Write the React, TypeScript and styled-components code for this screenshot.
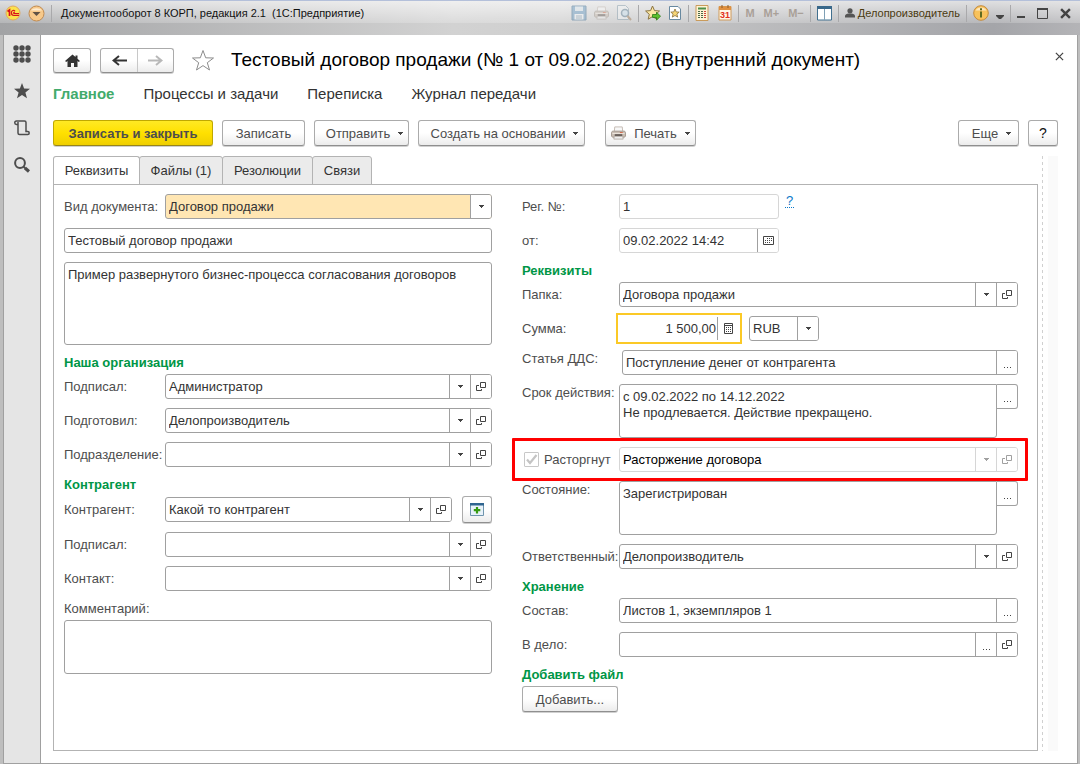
import React from 'react';
import styled, { createGlobalStyle, css } from 'styled-components';

const GlobalStyle = createGlobalStyle`
  *, *::before, *::after { box-sizing: border-box; }
  body {
    margin: 0;
    font-family: "Liberation Sans", Arial, sans-serif;
    font-size: 13px;
    line-height: 17px;
    color: #333;
    background: #bebebe;
  }
  button, input, textarea, select { font: inherit; color: inherit; margin: 0; }
  svg { display: block; flex: none; }
`;

/* ---------- window frame ---------- */

const Window = styled.div`
  display: flex;
  flex-direction: column;
  min-height: 100vh;
`;

const TitleBar = styled.header`
  height: 35px;
  border-top: 1px solid #b4c0da;
  background: linear-gradient(90deg, #a2a3a5 0%, #d2d2d2 42%, #cfcfcf 52%, #a4a5a9 92%, #b4b4b7 100%);
`;

const TitleStrip = styled.div`
  display: flex;
  align-items: center;
  height: 22px;
  padding: 2px 9px 0 5px;
  font-size: 11px;
  line-height: 16px;
  color: #111;
  background: linear-gradient(180deg, rgba(255, 255, 255, 0.65), rgba(255, 255, 255, 0.2));
`;

const WindowTitle = styled.div`
  flex: 1;
  white-space: pre;
`;

const Separator = styled.span`
  width: 1px;
  height: 17px;
  margin: 0 6px;
  background: #a9a9ab;
`;

const Tool = styled.button<{ $faded?: boolean }>`
  display: flex;
  align-items: center;
  justify-content: center;
  height: 18px;
  padding: 0;
  border: 0;
  background: none;
  opacity: ${(p) => (p.$faded ? 0.5 : 1)};
`;

const ToolGroup = styled.div<{ $gap: number }>`
  display: flex;
  align-items: center;
  gap: ${(p) => p.$gap}px;
`;

const MemoryKey = styled(Tool)`
  font-weight: bold;
  color: #a9a098;
`;

const UserButton = styled(Tool)`
  gap: 3px;
  color: #4a3a10;
`;

const Body = styled.div`
  flex: 1;
  display: flex;
  margin: 0 2px 0 3px;
  border: solid #a0a0a0;
  border-width: 0 1px 1px;
  background: #fff;
`;

const SideBar = styled.nav`
  display: flex;
  flex-direction: column;
  align-items: center;
  width: 37px;
  gap: 15px;
  padding-top: 8px;
  background: #e5e5e5;
  border-right: 1px solid #a0a0a0;
`;

const SideButton = styled.button`
  display: flex;
  align-items: center;
  justify-content: center;
  width: 22px;
  height: 22px;
  padding: 0;
  border: 0;
  background: none;
`;

/* ---------- page header ---------- */

const Page = styled.main`
  flex: 1;
  min-width: 0;
  display: flex;
  flex-direction: column;
  padding: 12px 19px 12px 12px;
`;

const PageHeader = styled.div`
  display: flex;
  align-items: center;
  height: 26px;
`;

const buttonFace = css`
  border: 1px solid #ababab;
  border-bottom-color: #8f8f8f;
  border-radius: 3px;
  background: linear-gradient(180deg, #fff 50%, #ececec);
  box-shadow: 0 1px 0 #d0d0d0;
`;

const NavGroup = styled.div`
  ${buttonFace}
  display: flex;
  height: 25px;
  margin-right: 9px;
`;

const NavButton = styled.button`
  display: flex;
  align-items: center;
  justify-content: center;
  width: 36px;
  padding: 0;
  border: 0;
  background: none;
  & + & { border-left: 1px solid #c8c8c8; }
`;

const StarButton = styled.button`
  display: flex;
  margin: 0 16px 0 8px;
  padding: 0;
  border: 0;
  background: none;
`;

const PageTitle = styled.h1`
  flex: 1;
  margin: 0;
  font-size: 19px;
  line-height: 26px;
  font-weight: normal;
  color: #000;
`;

const CloseButton = styled.button`
  align-self: flex-start;
  display: flex;
  padding: 5px 0 0;
  margin-right: -6px;
  border: 0;
  background: none;
`;

const Sections = styled.nav`
  display: flex;
  gap: 29px;
  margin-top: 11px;
  font-size: 15px;
  line-height: 20px;
`;

const SectionLink = styled.a<{ $current?: boolean }>`
  text-decoration: none;
  color: ${(p) => (p.$current ? '#42ab6c' : '#333')};
  font-weight: ${(p) => (p.$current ? 'bold' : 'normal')};
`;

/* ---------- command bar ---------- */

const Commands = styled.div`
  display: flex;
  gap: 9px;
  margin-top: 16px;
`;

const Spacer = styled.div`
  flex: 1;
`;

const Command = styled.button<{ $primary?: boolean; $menu?: boolean; $width: number; $apart?: boolean }>`
  ${buttonFace}
  display: flex;
  align-items: center;
  justify-content: center;
  gap: 8px;
  width: ${(p) => p.$width}px;
  height: 26px;
  padding: 0 0 0 ${(p) => (p.$menu ? 6 : 0)}px;
  margin-left: ${(p) => (p.$apart ? 11 : 0)}px;
  white-space: nowrap;
  color: #4d4d4d;
  ${(p) =>
    p.$primary &&
    css`
      font-weight: bold;
      border-color: #c0a800;
      border-bottom-color: #97851a;
      background: linear-gradient(180deg, #ffe924, #ffe000 50%, #efcf00);
    `}
`;

const HelpCommand = styled(Command)`
  font-size: 14px;
  color: #111;
`;

/* ---------- tabs ---------- */

const Content = styled.div`
  flex: 1;
  display: flex;
  margin-top: 10px;
`;

const TabArea = styled.div`
  flex: 1;
  min-width: 0;
  display: flex;
  flex-direction: column;
`;

const Tabs = styled.div`
  display: flex;
`;

const Tab = styled.button<{ $active?: boolean; $width: number }>`
  width: ${(p) => p.$width}px;
  height: 29px;
  margin: 0 -1px -1px 0;
  padding: 0;
  border: 1px solid #b3b3b3;
  border-bottom-color: ${(p) => (p.$active ? '#fff' : '#b3b3b3')};
  border-radius: 3px 3px 0 0;
  background: ${(p) => (p.$active ? '#fff' : '#ebebeb')};
`;

const Panel = styled.form`
  flex: 1;
  display: grid;
  grid-template-columns: minmax(0, 428fr) minmax(0, 496fr);
  align-items: start;
  gap: 30px;
  padding: 9px 19px 10px 10px;
  border: 1px solid #b3b3b3;
`;

const SplitLine = styled.div`
  width: 1px;
  margin: 0 5px 0 4px;
  background: repeating-linear-gradient(180deg, #d0d0d0 0 3px, transparent 3px 6px);
`;

const ScrollTrack = styled.div`
  width: 10px;
  background: #fafafa;
`;

/* ---------- form ---------- */

const Column = styled.div`
  display: flex;
  flex-direction: column;
  gap: 9px;
`;

const Group = styled.section`
  display: flex;
  flex-direction: column;
  align-items: stretch;
  gap: 9px;
`;

const GroupTitle = styled.h2`
  margin: 0 0 -6px;
  font-size: 13px;
  line-height: 17px;
  color: #009646;
`;

const BlockLabel = styled.label`
  margin-bottom: -6px;
  color: #4d4d4d;
`;

const Row = styled.div<{ $top?: boolean; $right?: boolean }>`
  position: relative;
  display: grid;
  grid-template-columns: ${(p) => (p.$right ? 97 : 101)}px minmax(0, 1fr);
  align-items: ${(p) => (p.$top ? 'start' : 'center')};
`;

const Label = styled.label`
  white-space: nowrap;
  color: #4d4d4d;
`;

const Line = styled.div<{ $indent?: boolean }>`
  display: flex;
  align-items: center;
  gap: 10px;
  padding-left: ${(p) => (p.$indent ? 3 : 0)}px;
`;

const Box = styled.div<{ $width?: number; $light?: boolean; $focus?: boolean; $fill?: string }>`
  display: flex;
  flex: ${(p) => (p.$width ? 'none' : '1')};
  width: ${(p) => (p.$width ? p.$width + 'px' : 'auto')};
  min-width: 0;
  height: 25px;
  overflow: hidden;
  border: 1px solid ${(p) => (p.$light ? '#d6d6d6' : '#a0a0a0')};
  border-radius: 3px;
  background: #fff;
  ${(p) => p.$fill && `background: ${p.$fill};`}
  ${(p) =>
    p.$focus &&
    css`
      border-color: transparent;
      border-radius: 0;
      outline: 2px solid #fbc926;
      outline-offset: 1px;
    `}
`;

const Input = styled.input<{ $right?: boolean; $dark?: boolean }>`
  flex: 1;
  min-width: 0;
  width: 100%;
  height: 23px;
  padding: 0 3px;
  padding-right: ${(p) => (p.$right ? 1 : 3)}px;
  border: 0;
  outline: 0;
  background: none;
  text-align: ${(p) => (p.$right ? 'right' : 'left')};
  ${(p) => p.$dark && 'color: #000;'}
`;

const BoxButton = styled.button<{ $light?: boolean }>`
  display: flex;
  align-items: center;
  justify-content: center;
  width: 21px;
  height: 23px;
  flex: none;
  padding: 0;
  border: 0;
  border-left: 1px solid ${(p) => (p.$light ? '#d6d6d6' : '#a0a0a0')};
  background: #fff;
`;

const TextArea = styled.textarea<{ $height: number; $joined?: boolean }>`
  display: block;
  flex: 1 1 auto;
  width: 100%;
  min-width: 0;
  height: ${(p) => p.$height}px;
  padding: 4px 3px;
  line-height: 16px;
  border: 1px solid #a0a0a0;
  border-radius: ${(p) => (p.$joined ? '3px 0 3px 3px' : '3px')};
  outline: 0;
  resize: none;
  overflow: hidden;
`;

const SideEllipsis = styled.button`
  display: flex;
  align-items: center;
  justify-content: center;
  flex: none;
  width: 21px;
  height: 25px;
  padding: 0;
  border: 1px solid #a0a0a0;
  border-left: 0;
  border-radius: 0 3px 3px 0;
  background: #fff;
`;

const AreaLine = styled.div`
  display: flex;
  align-items: flex-start;
`;

const HintLink = styled.a`
  align-self: flex-start;
  padding: 0 1px;
  font-size: 13px;
  line-height: 13px;
  color: #0a78c8;
  text-decoration: none;
  border-bottom: 1px dotted #0a78c8;
`;

const HintLine = styled(Line)`
  gap: 6px;
`;

const HighlightedRow = styled(Row)`
  &::after {
    content: '';
    position: absolute;
    inset: -9px -10px;
    border: 3px solid #f00;
    border-radius: 1px;
    pointer-events: none;
  }
`;

const CheckLabel = styled.label`
  display: flex;
  align-items: center;
  gap: 5px;
  padding-left: 2px;
  color: #4d4d4d;
`;

const Check = styled.input`
  appearance: none;
  width: 15px;
  height: 15px;
  margin: 0;
  border: 1px solid #c8c8c8;
  border-radius: 1px;
  background: #fff;
`;

const CheckHolder = styled.span`
  position: relative;
  display: flex;
  & svg { position: absolute; inset: 0; pointer-events: none; }
`;

const AddButton = styled.button`
  ${buttonFace}
  display: flex;
  align-items: center;
  justify-content: center;
  width: 30px;
  height: 27px;
  padding: 0;
`;

/* ---------- icons ---------- */

const Caret = ({ color = '#444' }: { color?: string }) => (
  <svg width="5" height="3" viewBox="0 0 5 3" shapeRendering="crispEdges">
    <path d="M0 0h5v1H4v1H3v1H2V2H1V1H0z" fill={color} />
  </svg>
);

const OpenIcon = ({ color = '#444' }: { color?: string }) => (
  <svg width="10" height="10" viewBox="0 0 10 10" fill="none" stroke={color}>
    <path d="M4.500 0.500h5v5h-5z" />
    <path d="M3 3.500H0.500V8.500H5.500V7" />
  </svg>
);

const Dots = () => (
  <svg width="9" height="12" viewBox="0 0 9 12" fill="#444">
    <path d="M1 10h1v1H1zM4 10h1v1H4zM7 10h1v1H7z" />
  </svg>
);

const CalendarIcon = () => (
  <svg width="11" height="9" viewBox="0 0 11 9" fill="none" stroke="#444">
    <path d="M.5.5h10v8H.5z" />
    <path d="M4 2.500h1M6 2.500h1M8 2.500h1M2 4.500h1M4 4.500h1M6 4.500h1M8 4.500h1M2 6.500h1M4 6.500h1M6 6.500h1" />
  </svg>
);

const CalculatorIcon = () => (
  <svg width="9" height="11" viewBox="0 0 9 11" fill="none" stroke="#444">
    <path d="M.5.5h8v10h-8zM.5 2.500h8" />
    <path d="M2 4.500h1M4 4.500h1M6 4.500h1M2 6.500h1M4 6.500h1M6 6.500h1M2 8.500h1M4 8.500h1M6 8.500h1" />
  </svg>
);

const Logo = () => (
  <svg width="16" height="16" viewBox="0 0 16 16">
    <circle cx="8" cy="8" r="7" fill="#fbe34c" stroke="#e0a860" />
    <path d="M2.500 6.500 4.500 5v6" fill="none" stroke="#d8141c" strokeWidth="1.700" />
    <path d="M10 6.300C9 4.700 6.400 5.200 6.400 7.800c0 2 1.300 2.700 2.600 2.700H14M9.800 7.500c-1.400-.4-1.600 1.200-.4 1.200H14" fill="none" stroke="#d8141c" strokeWidth="1.200" />
  </svg>
);

const MenuCircle = () => (
  <svg width="17" height="17" viewBox="0 0 17 17">
    <circle cx="8.500" cy="8.500" r="7.500" fill="#f7c98a" stroke="#c08b52" />
    <path d="M3 5.500a6.500 5 0 0 1 11 0z" fill="#fdebd0" />
    <path d="M4.500 7h8l-4 4z" fill="#5f5245" />
  </svg>
);

const Floppy = () => (
  <svg width="16" height="16" viewBox="0 0 16 16">
    <path d="M1 1h14v14H1z" fill="#6f9fc4" stroke="#4b7798" />
    <path d="M4 1.500h8V6H4z" fill="#dfe9f0" />
    <path d="M3.500 9h9v5.500h-9z" fill="#f4f7f9" />
    <path d="M5 11h6M5 13h6" stroke="#7c9bb0" />
  </svg>
);

const Printer = () => (
  <svg width="15" height="14" viewBox="0 0 16 14">
    <path d="M4 .5h8l.5 5h-9z" fill="#f8f8f8" stroke="#c3bab2" />
    <path d="M1.500 5h13l1 1.500v4l-1.500 1H2l-1.500-1v-4z" fill="#c9bdb2" stroke="#a2978e" />
    <path d="M1.500 7.500h13" stroke="#eee6de" />
    <path d="M4 8.500h8v1.500H4z" fill="#3b3430" />
    <path d="M9.500 6.500h3" stroke="#d66a4a" />
    <path d="M3.500 10.500h9l.5 3h-10z" fill="#efefef" stroke="#b5aea6" />
  </svg>
);

const Preview = () => (
  <svg width="16" height="16" viewBox="0 0 16 16">
    <path d="M1.500.5h8l3 3v11h-11z" fill="#f2f4f5" stroke="#8aa0ae" />
    <circle cx="9" cy="8" r="3.500" fill="#cfe3f0" stroke="#68869a" strokeWidth="1.500" />
    <path d="m11.500 11 3.500 4" stroke="#a3805c" strokeWidth="2" />
  </svg>
);

const StarArrow = () => (
  <svg width="16" height="16" viewBox="0 0 16 16">
    <path d="m7.500 1 2 4.600 5 .4-3.800 3.300 1.200 4.900-4.400-2.600-4.300 2.600 1.100-4.900L.6 6l5-.4z" fill="#fbe7a4" stroke="#8b7440" />
    <path d="M7.500 9.500h4V7.200l4 4-4 4v-2.700h-4z" fill="#5cc02c" stroke="#2c7c17" strokeWidth=".8" />
  </svg>
);

const DocStar = () => (
  <svg width="14" height="16" viewBox="0 0 14 16">
    <path d="M1.500 1.500h8.500l2.500 2.500v10.500h-11z" fill="#fff" stroke="#6889a0" />
    <path d="m7 4 1.200 2.900 3 .2-2.300 2 .8 3L7 10.500l-2.700 1.600.8-3-2.300-2 3-.2z" fill="#f7d675" stroke="#8a6f3a" strokeWidth=".8" />
  </svg>
);

const CalcColor = () => (
  <svg width="14" height="16" viewBox="0 0 14 16">
    <path d="M1 .5h12v15H1z" fill="#fff3d4" stroke="#c99b5c" />
    <path d="M3 2.500h8v2H3z" fill="#4c8f4a" />
    <path d="M3 6.500h2M6 6.500h2M3 8.500h2M6 8.500h2M3 10.500h2M6 10.500h2M3 12.500h2M6 12.500h2" stroke="#4a6a48" />
    <path d="M9 6.500h2M9 8.500h2M9 10.500h2M9 12.500h2" stroke="#d0453a" />
  </svg>
);

const DateColor = () => (
  <svg width="14" height="16" viewBox="0 0 14 16">
    <path d="M1 1.500h12v13.500H1z" fill="#fff8ea" stroke="#cf9a5a" />
    <path d="M1 1.500h12v3.500H1z" fill="#e0903f" />
    <path d="M4 0v3M10 0v3" stroke="#8b5a2a" />
    <text x="7" y="13" fontSize="9" fontWeight="bold" textAnchor="middle" fill="#e2321c">31</text>
  </svg>
);

const PanelsIcon = () => (
  <svg width="15" height="15" viewBox="0 0 15 15">
    <path d="M.5.5h14v13.500H.5z" fill="#fff" stroke="#41708f" />
    <path d="M0 0h15v3H0z" fill="#39688a" />
    <path d="M7.500 3v11" stroke="#7fa0b5" />
  </svg>
);

const Person = () => (
  <svg width="10" height="10" viewBox="0 0 10 10" fill="#555">
    <circle cx="5" cy="2.800" r="2.600" />
    <path d="M0 9.500V8c0-1.500 2-2.500 3.500-2.500h3C8 5.500 10 6.500 10 8v1.500z" />
  </svg>
);

const Info = () => (
  <svg width="16" height="16" viewBox="0 0 16 16">
    <circle cx="8" cy="8" r="7.300" fill="#f8c25c" stroke="#c48b3e" />
    <path d="M2.500 5.500a6 5 0 0 1 11 0z" fill="#fde7bd" />
    <path d="M8 3.200v2M8 6.500v6" stroke="#5f6a20" strokeWidth="2" />
  </svg>
);

const HomeIcon = () => (
  <svg width="15" height="13" viewBox="0 0 15 13" fill="#333">
    <path d="M7.500.5 0 7l1.200 1L2.500 7v6H6V9h3v4h3.500V7l1.300 1L15 7l-2.500-2.200V1.500h-2V3z" />
  </svg>
);

const Arrow = ({ flip, color }: { flip?: boolean; color: string }) => (
  <svg width="15" height="11" viewBox="0 0 15 11">
    <path d={flip ? 'M0 4.500h9v2H0z' : 'M15 4.500H6v2h9z'} fill={color} />
    <path
      d={flip ? 'M8 1l5.500 4.500L8 10M9 5.500h4' : 'M7 1 1.500 5.500 7 10M6 5.500H2'}
      fill="none"
      stroke={color}
      strokeWidth="2"
    />
  </svg>
);

const FavouriteStar = () => (
  <svg width="24" height="22" viewBox="0 0 24 22">
    <path d="m12 1.500 2.700 7.300 7.800.2-6.200 4.700 2.200 7.300-6.500-4.400L5.500 21l2.200-7.300L1.500 9l7.800-.2z" fill="#fff" stroke="#8c8c8c" />
  </svg>
);

const GridIcon = () => (
  <svg width="18" height="18" viewBox="0 0 18 18" fill="#4d4d4d">
    {[3, 9, 15].map((y) => [3, 9, 15].map((x) => <circle key={`${x}-${y}`} cx={x} cy={y} r="2.700" />))}
  </svg>
);

const SideStar = () => (
  <svg width="16" height="16" viewBox="0 0 16 16" fill="#4d4d4d">
    <path d="m8 0 2.100 5.600 5.900.2-4.600 3.700 1.600 5.700-5-3.300-5 3.300 1.600-5.700L0 5.800l5.900-.2z" />
  </svg>
);

const ScrollIcon = () => (
  <svg width="16" height="16" viewBox="0 0 16 16" fill="none" stroke="#4d4d4d" strokeWidth="1.500">
    <path d="M4 4.500H2.500A1.700 1.700 0 0 1 2.500 1H10.500Q12 1 12 2.500V11.500H13.700A1.500 1.500 0 0 1 13.700 14.500H5.500Q4 14.500 4 13V2" />
  </svg>
);

const SearchIcon = () => (
  <svg width="16" height="16" viewBox="0 0 16 16" fill="none" stroke="#4d4d4d">
    <circle cx="6" cy="6" r="4.900" strokeWidth="2" />
    <path d="m9.700 9.700 1.500 1.500" strokeWidth="2" />
    <path d="m11 11 4 3.500" strokeWidth="3.200" />
  </svg>
);

const AddWindow = () => (
  <svg width="14" height="13" viewBox="0 0 14 13">
    <path d="M.5.5h13v12H.5z" fill="#e8f2fa" stroke="#6f95ae" />
    <path d="M0 0h14v2.500H0z" fill="#2f6590" />
    <path d="M7 4v6.500M3.800 7.200h6.500" stroke="#359a10" strokeWidth="2.200" />
  </svg>
);

const CheckMark = () => (
  <svg width="15" height="15" viewBox="0 0 15 15">
    <path d="M3 7.500 6 11l6.500-8" fill="none" stroke="#c4c4c4" strokeWidth="2.200" />
  </svg>
);

const Minimize = () => (
  <svg width="8" height="12" viewBox="0 0 8 12"><path d="M0 10h8" stroke="#444" strokeWidth="2" /></svg>
);
const Maximize = () => (
  <svg width="11" height="11" viewBox="0 0 11 11">
    <path d="M.5 1v9.500h10V1" fill="none" stroke="#444" /><path d="M0 1h11" stroke="#444" strokeWidth="2" />
  </svg>
);
const MoreArrow = () => (
  <svg width="8" height="12" viewBox="0 0 8 12">
    <path d="M0 8h8v1L5 12H3L0 9z" fill="#444" />
  </svg>
);
const Cross = ({ size, width }: { size: number; width: number }) => (
  <svg width={size} height={size} viewBox="0 0 10 10">
    <path d="m1 1 8 8M9 1 1 9" stroke="#444" strokeWidth={width} />
  </svg>
);

/* ---------- field parts ---------- */

type Control = 'drop' | 'open' | 'more' | 'calendar' | 'calc';

const controlNames: Record<Control, string> = {
  drop: 'Выбрать из списка',
  open: 'Открыть',
  more: 'Выбрать',
  calendar: 'Календарь',
  calc: 'Калькулятор',
};

const ControlIcon = ({ kind, muted }: { kind: Control; muted?: boolean }) => {
  const color = muted ? '#a0a0a0' : '#444';
  if (kind === 'drop') return <Caret color={color} />;
  if (kind === 'open') return <OpenIcon color={color} />;
  if (kind === 'calendar') return <CalendarIcon />;
  if (kind === 'calc') return <CalculatorIcon />;
  return <Dots />;
};

type FieldProps = {
  id: string;
  value?: string;
  controls?: Control[];
  width?: number;
  light?: boolean;
  muted?: boolean;
  focus?: boolean;
  right?: boolean;
  fill?: string;
  name?: string;
};

const Field = ({ id, value = '', controls = [], width, light, muted, focus, right, fill, name }: FieldProps) => (
  <Box $width={width} $light={light || muted} $focus={focus} $fill={fill}>
    <Input id={id} defaultValue={value} $right={right} $dark={muted} aria-label={name} readOnly={muted} />
    {controls.map((kind) => (
      <BoxButton key={kind} type="button" $light={muted} aria-label={controlNames[kind]}>
        <ControlIcon kind={kind} muted={muted} />
      </BoxButton>
    ))}
  </Box>
);

const LabeledField = ({
  label,
  rightSide,
  top,
  indent,
  ...field
}: FieldProps & { label: string; rightSide?: boolean; top?: boolean; indent?: boolean }) => (
  <Row $right={rightSide} $top={top}>
    <Label htmlFor={field.id}>{label}</Label>
    <Line $indent={indent}>
      <Field {...field} />
    </Line>
  </Row>
);

const LabeledArea = ({ id, label, value }: { id: string; label: string; value: string }) => (
  <Row $right $top>
    <Label htmlFor={id}>{label}</Label>
    <AreaLine>
      <TextArea id={id} $height={54} $joined defaultValue={value} />
      <SideEllipsis type="button" aria-label="Выбрать"><Dots /></SideEllipsis>
    </AreaLine>
  </Row>
);

/* ---------- screen ---------- */

export default function App() {
  return (
    <>
      <GlobalStyle />
      <Window>
        <TitleBar>
          <TitleStrip>
            <ToolGroup $gap={7}>
              <Tool aria-label="1С"><Logo /></Tool>
              <Tool aria-label="Главное меню"><MenuCircle /></Tool>
            </ToolGroup>
            <Separator />
            <WindowTitle>{' Документооборот 8 КОРП, редакция 2.1  (1С:Предприятие)'}</WindowTitle>
            <ToolGroup $gap={7}>
              <Tool $faded aria-label="Сохранить"><Floppy /></Tool>
              <Tool $faded aria-label="Печать"><Printer /></Tool>
              <Tool $faded aria-label="Просмотр"><Preview /></Tool>
            </ToolGroup>
            <Separator />
            <ToolGroup $gap={7}>
              <Tool aria-label="Добавить в избранное"><StarArrow /></Tool>
              <Tool aria-label="Избранное"><DocStar /></Tool>
            </ToolGroup>
            <Separator />
            <ToolGroup $gap={9}>
              <Tool aria-label="Калькулятор"><CalcColor /></Tool>
              <Tool aria-label="Календарь"><DateColor /></Tool>
            </ToolGroup>
            <Separator />
            <ToolGroup $gap={9}>
              <MemoryKey>M</MemoryKey>
              <MemoryKey>M+</MemoryKey>
              <MemoryKey>M−</MemoryKey>
            </ToolGroup>
            <Separator />
            <Tool aria-label="Панели"><PanelsIcon /></Tool>
            <Separator />
            <UserButton><Person />Делопроизводитель</UserButton>
            <Separator />
            <ToolGroup $gap={7}>
              <Tool aria-label="Справка"><Info /></Tool>
              <Tool aria-label="Ещё"><MoreArrow /></Tool>
            </ToolGroup>
            <Separator />
            <ToolGroup $gap={12}>
              <Tool aria-label="Свернуть"><Minimize /></Tool>
              <Tool aria-label="Развернуть"><Maximize /></Tool>
              <Tool aria-label="Закрыть окно"><Cross size={11} width={2.2} /></Tool>
            </ToolGroup>
          </TitleStrip>
        </TitleBar>

        <Body>
          <SideBar>
            <SideButton aria-label="Разделы"><GridIcon /></SideButton>
            <SideButton aria-label="Избранное"><SideStar /></SideButton>
            <SideButton aria-label="История"><ScrollIcon /></SideButton>
            <SideButton aria-label="Поиск"><SearchIcon /></SideButton>
          </SideBar>

          <Page>
            <PageHeader>
              <NavGroup>
                <NavButton aria-label="Домой"><HomeIcon /></NavButton>
              </NavGroup>
              <NavGroup>
                <NavButton aria-label="Назад"><Arrow color="#333" /></NavButton>
                <NavButton aria-label="Вперёд"><Arrow flip color="#b8b8b8" /></NavButton>
              </NavGroup>
              <StarButton aria-label="В избранное"><FavouriteStar /></StarButton>
              <PageTitle>Тестовый договор продажи (№ 1 от 09.02.2022) (Внутренний документ)</PageTitle>
              <CloseButton aria-label="Закрыть"><Cross size={9} width={1.4} /></CloseButton>
            </PageHeader>

            <Sections>
              <SectionLink href="#main" $current>Главное</SectionLink>
              <SectionLink href="#tasks">Процессы и задачи</SectionLink>
              <SectionLink href="#mail">Переписка</SectionLink>
              <SectionLink href="#log">Журнал передачи</SectionLink>
            </Sections>

            <Commands>
              <Command $primary $width={160}>Записать и закрыть</Command>
              <Command $width={83}>Записать</Command>
              <Command $width={95} $menu>Отправить <Caret /></Command>
              <Command $width={167} $menu>Создать на основании <Caret /></Command>
              <Command $width={91} $apart><Printer />Печать <Caret /></Command>
              <Spacer />
              <Command $width={61} $menu>Еще <Caret /></Command>
              <HelpCommand $width={30}>?</HelpCommand>
            </Commands>

            <Content>
              <TabArea>
                <Tabs>
                  <Tab $width={87} $active>Реквизиты</Tab>
                  <Tab $width={84}>Файлы (1)</Tab>
                  <Tab $width={91}>Резолюции</Tab>
                  <Tab $width={60}>Связи</Tab>
                </Tabs>

                <Panel>
                  <Column>
                    <LabeledField id="kind" label="Вид документа:" value="Договор продажи" controls={['drop']} fill="#ffe6b3" />
                    <Line>
                      <Field id="title" name="Заголовок" value="Тестовый договор продажи" />
                    </Line>
                    <TextArea
                      $height={83}
                      aria-label="Содержание"
                      defaultValue="Пример развернутого бизнес-процесса согласования договоров"
                    />
                    <Group>
                      <GroupTitle>Наша организация</GroupTitle>
                      <LabeledField id="signed" label="Подписал:" value="Администратор" controls={['drop', 'open']} />
                      <LabeledField id="prepared" label="Подготовил:" value="Делопроизводитель" controls={['drop', 'open']} />
                      <LabeledField id="unit" label="Подразделение:" controls={['drop', 'open']} />
                    </Group>
                    <Group>
                      <GroupTitle>Контрагент</GroupTitle>
                      <Row>
                        <Label htmlFor="partner">Контрагент:</Label>
                        <Line>
                          <Field id="partner" value="Какой то контрагент" controls={['drop', 'open']} />
                          <AddButton type="button" aria-label="Создать контрагента"><AddWindow /></AddButton>
                        </Line>
                      </Row>
                      <LabeledField id="partner-signed" label="Подписал:" controls={['drop', 'open']} />
                      <LabeledField id="contact" label="Контакт:" controls={['drop', 'open']} />
                    </Group>
                    <BlockLabel htmlFor="comment">Комментарий:</BlockLabel>
                    <TextArea id="comment" $height={54} />
                  </Column>

                  <Column>
                    <Row $right>
                      <Label htmlFor="number">Рег. №:</Label>
                      <HintLine>
                        <Field id="number" value="1" width={160} light />
                        <HintLink href="#hint">?</HintLink>
                      </HintLine>
                    </Row>
                    <LabeledField id="date" label="от:" value="09.02.2022 14:42" controls={['calendar']} width={160} light rightSide />
                    <Group>
                      <GroupTitle>Реквизиты</GroupTitle>
                      <LabeledField id="folder" label="Папка:" value="Договора продажи" controls={['drop', 'open']} rightSide />
                      <Row $right>
                        <Label htmlFor="sum">Сумма:</Label>
                        <Line>
                          <Field id="sum" value="1 500,00" controls={['calc']} width={120} focus right />
                          <Field id="currency" name="Валюта" value="RUB" controls={['drop']} width={70} />
                        </Line>
                      </Row>
                      <LabeledField id="article" label="Статья ДДС:" value="Поступление денег от контрагента" controls={['more']} rightSide top indent />
                      <LabeledArea
                        id="term"
                        label="Срок действия:"
                        value={'с 09.02.2022 по 14.12.2022\nНе продлевается. Действие прекращено.'}
                      />
                      <HighlightedRow $right>
                        <CheckLabel>
                          <CheckHolder>
                            <Check type="checkbox" defaultChecked disabled />
                            <CheckMark />
                          </CheckHolder>
                          Расторгнут
                        </CheckLabel>
                        <Line>
                          <Field id="reason" name="Основание" value="Расторжение договора" controls={['drop', 'open']} muted />
                        </Line>
                      </HighlightedRow>
                      <LabeledArea id="state" label="Состояние:" value="Зарегистрирован" />
                      <LabeledField id="owner" label="Ответственный:" value="Делопроизводитель" controls={['drop', 'open']} rightSide />
                    </Group>
                    <Group>
                      <GroupTitle>Хранение</GroupTitle>
                      <LabeledField id="parts" label="Состав:" value="Листов 1, экземпляров 1" controls={['more']} rightSide />
                      <LabeledField id="case" label="В дело:" controls={['more', 'open']} rightSide />
                    </Group>
                    <Group>
                      <GroupTitle>Добавить файл</GroupTitle>
                      <Command type="button" $width={96}>Добавить...</Command>
                    </Group>
                  </Column>
                </Panel>
              </TabArea>
              <SplitLine />
              <ScrollTrack />
            </Content>
          </Page>
        </Body>
      </Window>
    </>
  );
}
